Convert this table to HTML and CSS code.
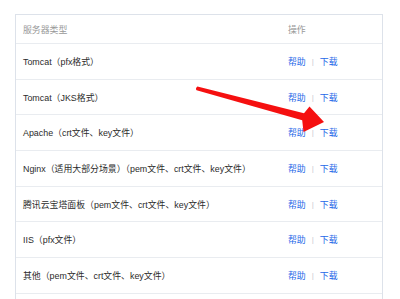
FILE: index.html
```html
<!DOCTYPE html>
<html lang="zh-CN">
<head>
<meta charset="utf-8">
<link rel="stylesheet" href="styles.css">
</head>
<body>
<div class="page">
  <div class="table">
    <div class="row head">
      <div class="cell">服务器类型</div>
      <div class="cell">操作</div>
    </div>
    <div class="row">
      <div class="cell">Tomcat（pfx格式）</div>
      <div class="cell ops"><a>帮助</a><span class="sep">|</span><a>下载</a></div>
    </div>
    <div class="row">
      <div class="cell">Tomcat（JKS格式）</div>
      <div class="cell ops"><a>帮助</a><span class="sep">|</span><a>下载</a></div>
    </div>
    <div class="row">
      <div class="cell">Apache（crt文件、key文件）</div>
      <div class="cell ops"><a>帮助</a><span class="sep">|</span><a>下载</a></div>
    </div>
    <div class="row">
      <div class="cell">Nginx（适用大部分场景）（pem文件、crt文件、key文件）</div>
      <div class="cell ops"><a>帮助</a><span class="sep">|</span><a>下载</a></div>
    </div>
    <div class="row">
      <div class="cell">腾讯云宝塔面板（pem文件、crt文件、key文件）</div>
      <div class="cell ops"><a>帮助</a><span class="sep">|</span><a>下载</a></div>
    </div>
    <div class="row">
      <div class="cell">IIS（pfx文件）</div>
      <div class="cell ops"><a>帮助</a><span class="sep">|</span><a>下载</a></div>
    </div>
    <div class="row">
      <div class="cell">其他（pem文件、crt文件、key文件）</div>
      <div class="cell ops"><a>帮助</a><span class="sep">|</span><a>下载</a></div>
    </div>
    <div class="row last"></div>
  </div>
  <svg class="arrow" width="400" height="299" viewBox="0 0 400 299">
    <path d="M197.4 86.4 L304 113.2 L309.5 106.5 L324 122 L303.5 132 L302.2 120.2 L196.6 90.2 Q195 88.6 197.4 86.4 Z" fill="#f51010"/>
  </svg>
</div>
</body>
</html>
```
FILE: styles.css
```css
html, body {
  margin: 0;
  padding: 0;
  background: #fff;
}
.page {
  position: relative;
  width: 400px;
  height: 299px;
  overflow: hidden;
  padding: 14px 0 0 15px;
  box-sizing: border-box;
  font-family: "Liberation Sans", "Noto Sans CJK SC", sans-serif;
  font-size: 8.9px;
  color: #2b2b2b;
}
.table {
  width: 368px;
  border: 1px solid #dde2ea;
  border-bottom: none;
  box-sizing: border-box;
}
.row {
  display: grid;
  grid-template-columns: 1fr 101px;
  align-items: center;
  height: 35.7px;
  border-bottom: 1px solid #e9ecf0;
  box-sizing: border-box;
}
.row.head {
  height: 29px;
  color: #999;
}
.row.last {
  border-bottom: none;
}
.cell {
  padding-left: 7px;
  white-space: nowrap;
}
.ops {
  display: flex;
  align-items: center;
}
.ops a {
  color: #1d67e8;
}
.sep {
  color: #c8ccd2;
  margin: 0 6px 0 6px;
  font-size: 8px;
}
.arrow {
  position: absolute;
  left: 0;
  top: 0;
}
```
